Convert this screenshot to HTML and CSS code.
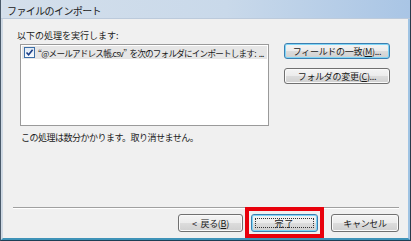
FILE: index.html
```html
<!DOCTYPE html>
<html lang="ja">
<head>
    <meta charset="UTF-8">
    <title>ファイルのインポート</title>
    <link rel="stylesheet" href="styles.css">
</head>
<body>
    <div class="window">
        <div class="titlebar">ファイルのインポート</div>
        <div class="client">
            <div class="main">
                <div class="left">
                    <div class="label">以下の処理を実行します:</div>
                    <div class="listbox">
                        <div class="row selected">
                            <span class="check">
                                <svg width="9" height="9" viewBox="0 0 9 9">
                                    <path d="M1.5 4.5 L3.6 6.8 L7.6 1.8" fill="none" stroke="#1c3f86" stroke-width="1.6"/>
                                </svg>
                            </span>
                            <span class="row-text">“@メールアドレス帳.csv” を次のフォルダにインポートします: ...</span>
                        </div>
                    </div>
                    <div class="note">この処理は数分かかります。取り消せません。</div>
                </div>
                <div class="side">
                    <button class="btn side-btn default">フィールドの一致(<u>M</u>)...</button>
                    <button class="btn side-btn">フォルダの変更(<u>C</u>)...</button>
                </div>
            </div>
            <div class="sep"></div>
            <div class="footer">
                <button class="btn back">&lt; 戻る(<u>B</u>)</button>
                <button class="btn finish default"><span class="focus">完了</span><span class="mark"></span></button>
                <button class="btn cancel">キャンセル</button>
            </div>
        </div>
    </div>
</body>
</html>
```

FILE: styles.css
```css
* {
    box-sizing: border-box;
}

body {
    margin: 0;
    width: 411px;
    height: 241px;
    overflow: hidden;
    font-family: "Noto Sans CJK JP", sans-serif;
    font-size: 9px;
    color: #1a1a1a;
}

.window {
    width: 411px;
    height: 241px;
    display: flex;
    flex-direction: column;
    background: #f0f0f0;
    border-left: 1px solid #4a5a6a;
    border-right: 1px solid #2a3a4a;
    border-bottom: 1px solid #1d3f55;
}

.titlebar {
    height: 19px;
    padding: 3px 0 0 6px;
    font-size: 10px;
    letter-spacing: -0.6px;
    color: #202020;
    background: linear-gradient(to right, #d4dfeb 0%, #c9d9ea 55%, #a9c5e5 100%);
    border-bottom: 1px solid #bccadb;
}

.client {
    flex: 1;
    display: flex;
    flex-direction: column;
    border-left: 2px solid #cfd9e4;
    border-right: 2px solid #9fc3e3;
    border-bottom: 2px solid #3f93b8;
}

.main {
    display: flex;
    padding: 10px 0 0 14px;
    height: 186px;
}

.left {
    width: 254px;
}

.label {
    height: 15px;
    letter-spacing: 0;
}

.listbox {
    margin-left: 3px;
    width: 249px;
    height: 82px;
    background: #fff;
    border: 1px solid #9a9a9a;
    padding: 1px;
}

.row {
    height: 13px;
    display: flex;
    align-items: center;
    gap: 3px;
    padding-left: 2px;
}

.row.selected {
    background: #e6e6e6;
}

.check {
    width: 11px;
    height: 11px;
    border: 1px solid #3d6fa7;
    background: linear-gradient(#dfe9f5, #f7fbff);
    display: flex;
    align-items: center;
    justify-content: center;
}

.row-text {
    white-space: nowrap;
    letter-spacing: -0.8px;
    font-size: 8.6px;
    word-spacing: 2px;
}

.note {
    padding: 5px 0 0 4px;
    letter-spacing: -0.5px;
}

.side {
    display: flex;
    flex-direction: column;
    gap: 9px;
    padding: 14px 0 0 13px;
}

.btn {
    height: 16px;
    padding: 0;
    font-family: "Noto Sans CJK JP", sans-serif;
    font-size: 9px;
    color: #1a1a1a;
    border: 1px solid #707070;
    border-radius: 3px;
    background: linear-gradient(#f4f4f4 0%, #ececec 48%, #dcdcdc 52%, #d0d0d0 100%);
    box-shadow: inset 0 0 0 1px #fafafa;
    letter-spacing: -0.3px;
    display: flex;
    align-items: center;
    justify-content: center;
}

.btn u {
    text-decoration: underline;
}

.btn.default {
    border-color: #3c7fb1;
    box-shadow: inset 0 0 0 1px #7fd6f7;
}

.side-btn {
    width: 106px;
}

.sep {
    margin: 2px 9px 0 10px;
    border-top: 1px solid #a0a0a0;
    border-bottom: 1px solid #ffffff;
}

.footer {
    display: flex;
    padding: 5px 0 0 175px;
}

.back {
    width: 65px;
    height: 18px;
    word-spacing: 2px;
}

.finish {
    width: 67px;
    height: 18px;
    margin-left: 8px;
    padding: 3px;
    position: relative;
    align-items: stretch;
}

.cancel {
    width: 68px;
    height: 18px;
    margin-left: 13px;
}

.focus {
    flex: 1;
    display: flex;
    align-items: center;
    justify-content: center;
    border: 1px dotted #333;
    letter-spacing: 1px;
}

.mark {
    position: absolute;
    left: -7px;
    right: -7px;
    top: -8px;
    bottom: -7px;
    border: 4px solid #e8000b;
}
```
